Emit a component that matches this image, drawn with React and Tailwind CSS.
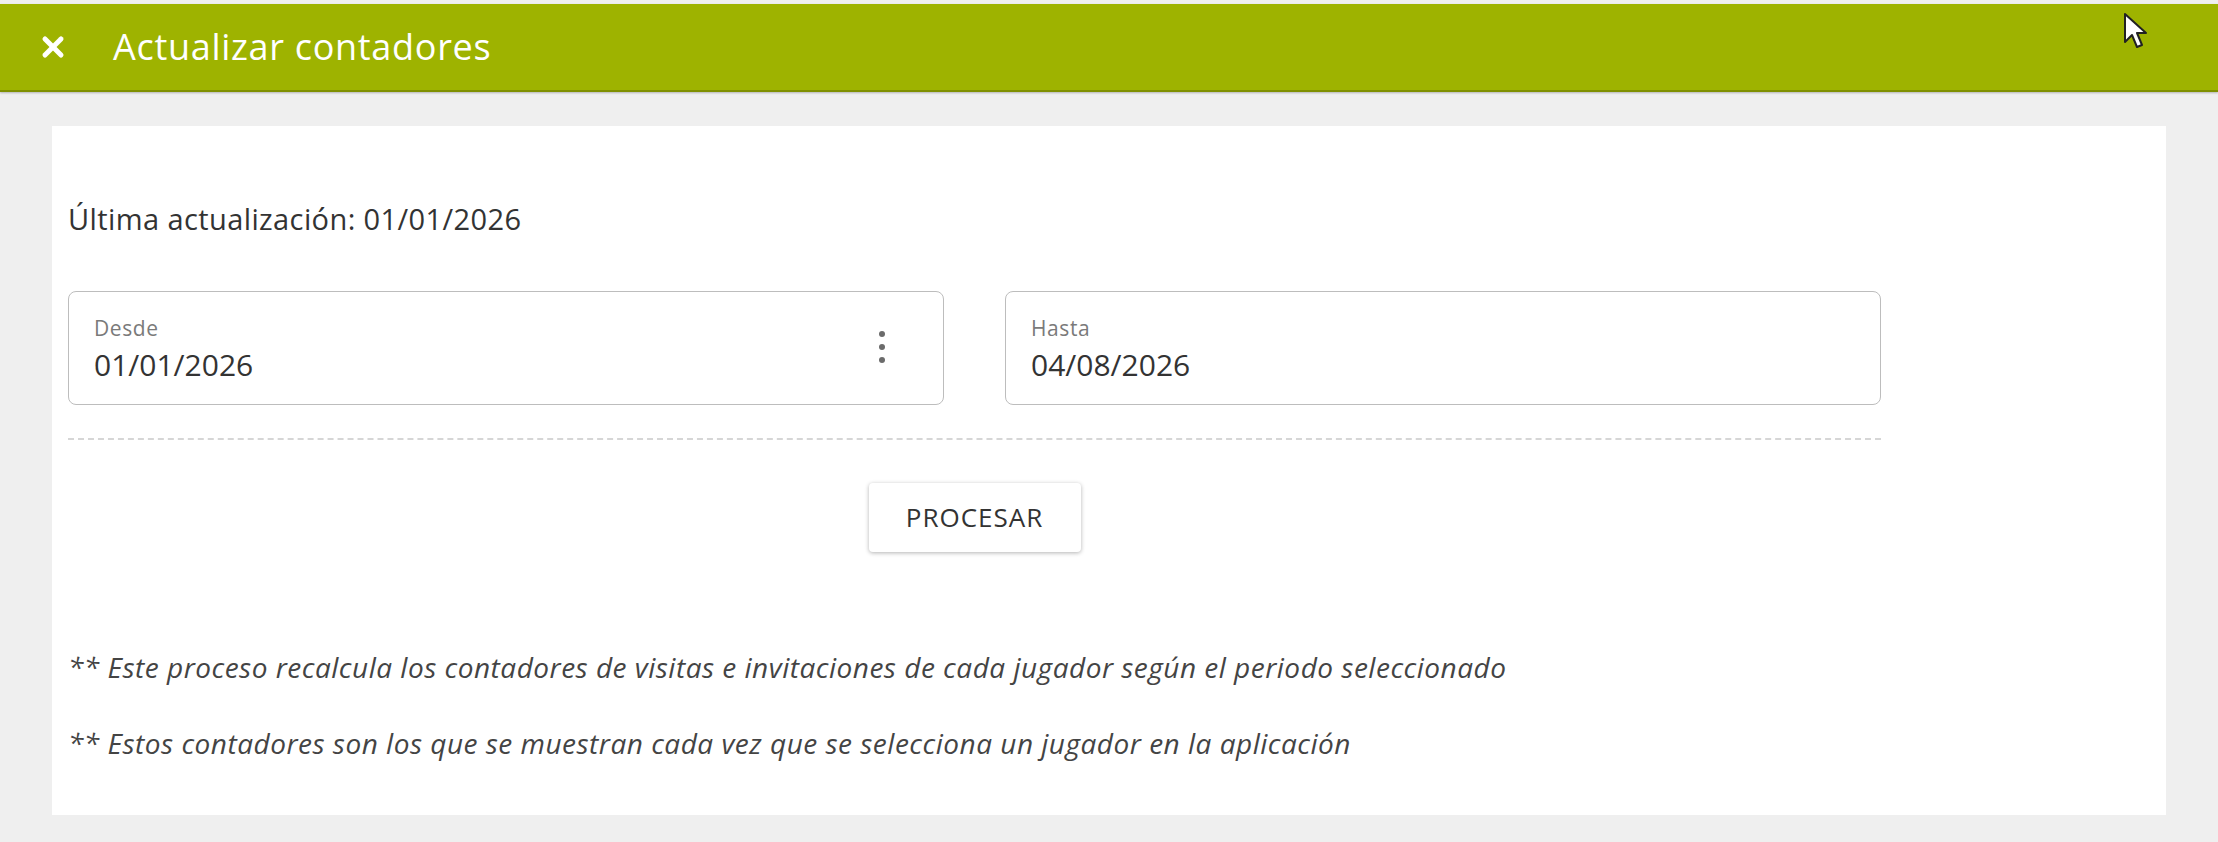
import { X } from "lucide-react";

const Field = ({ label, value, menu }) => {
  return (
    <div className="relative h-[114px] rounded-[8px] border-[1.5px] border-[#bdbdbd] bg-white pl-[25px]">
      <div className="pt-[23px] text-[21px] leading-[26px] tracking-[0.6px] text-[#7a7a7a]">{label}</div>
      <div className="mt-[7px] text-[30px] leading-[34px] text-[#333]">{value}</div>
      {menu && (
        <div className="absolute right-[58px] top-[39px] flex flex-col gap-[7px]">
          <span className="block h-[6px] w-[6px] rounded-full bg-[#6b6b6b]"></span>
          <span className="block h-[6px] w-[6px] rounded-full bg-[#6b6b6b]"></span>
          <span className="block h-[6px] w-[6px] rounded-full bg-[#6b6b6b]"></span>
        </div>
      )}
    </div>
  );
};

const App = () => {
  return (
    <div
      className="relative flex h-[842px] w-[2218px] flex-col bg-[#efefef] pt-[4px]"
      style={{ fontFamily: '"Open Sans", "Liberation Sans", sans-serif' }}
    >
      <header className="flex h-[88px] items-center border-b-2 border-[#7f9000] bg-[#9eb300] pl-[37px] shadow-[0_1px_2px_rgba(0,0,0,0.25)]">
        <X className="h-[32px] w-[32px] text-white" strokeWidth={3.75} />
        <h1 className="ml-[44px] text-[36px] font-medium tracking-[0.7px] text-white">Actualizar contadores</h1>
      </header>

      <main className="flex-1 px-[52px] pt-[34px] pb-[27px]">
        <section className="h-full bg-white pl-[16px] pt-[76px]">
          <div className="w-[1813px]">
            <p className="text-[29px] leading-[34px] tracking-[0.4px] text-[#333]">Última actualización: 01/01/2026</p>

            <div className="mt-[55px] grid grid-cols-2 gap-[61px]">
              <Field label="Desde" value="01/01/2026" menu />
              <Field label="Hasta" value="04/08/2026" />
            </div>

            <div className="mt-[33px] border-t-2 border-dashed border-[#d6d6d6]"></div>

            <div className="mt-[43px] flex justify-center">
              <button className="h-[69px] w-[212px] rounded-[4px] bg-white text-[26px] tracking-[1px] text-[#333] shadow-[0_1px_4px_rgba(0,0,0,0.3)]">
                PROCESAR
              </button>
            </div>

            <p className="mt-[99px] text-[28px] italic leading-[32px] tracking-[0.5px] text-[#444]">
              ** Este proceso recalcula los contadores de visitas e invitaciones de cada jugador según el periodo seleccionado
            </p>
            <p className="mt-[44px] text-[28px] italic leading-[32px] tracking-[0.5px] text-[#444]">
              ** Estos contadores son los que se muestran cada vez que se selecciona un jugador en la aplicación
            </p>
          </div>
        </section>
      </main>

      {/* mouse pointer */}
      <svg className="absolute left-[2123px] top-[12px]" width="26" height="40" viewBox="0 0 26 40">
        <path d="M2 2 L2 30 L9 23 L14 35 L19 33 L14 21 L23 21 Z" fill="white" stroke="#222" strokeWidth="2" strokeLinejoin="round" />
      </svg>
    </div>
  );
};

export default App;
